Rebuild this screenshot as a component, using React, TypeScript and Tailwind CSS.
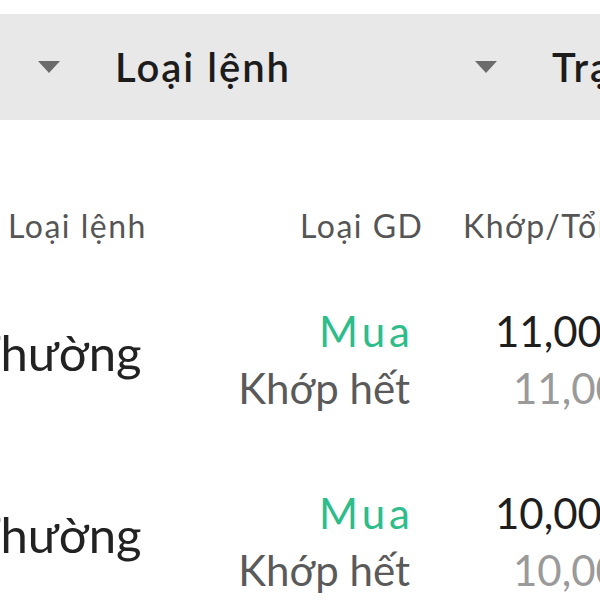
import React from "react";

function Caret() {
  return (
    <svg width="22" height="12" viewBox="0 0 22 12">
      <path d="M0 0 L22 0 L11 12 Z" fill="#6b6b6b" />
    </svg>
  );
}

const rows = [
  { kind: "Thường", side: "Mua", status: "Khớp hết", qty: "11,000", filled: "11,000" },
  { kind: "Thường", side: "Mua", status: "Khớp hết", qty: "10,000", filled: "10,000" },
];

export default function App() {
  return (
    <div
      className="w-[600px] h-[600px] overflow-hidden bg-white whitespace-nowrap"
      style={{ fontFamily: "Lato, 'Noto Sans', sans-serif" }}
    >
      <div className="h-[14px]" />

      {/* filter bar */}
      <div className="h-[106px] bg-[#e8e8e8] flex items-center">
        <div className="w-[115px] shrink-0 pl-[38px] flex items-center">
          <Caret />
        </div>
        <div className="w-[360px] shrink-0 text-[40px] tracking-[2px] font-semibold text-[#1c1c1c] leading-none">
          Loại lệnh
        </div>
        <div className="w-[77px] shrink-0 flex items-center">
          <Caret />
        </div>
        <div className="shrink-0 text-[40px] tracking-[2px] font-semibold text-[#1c1c1c] leading-none">
          Trạng thái
        </div>
      </div>

      {/* table header */}
      <div className="mt-[90px] flex items-center text-[32px] tracking-[1.5px] text-[#555555] leading-none">
        <div className="w-[300px] shrink-0 pl-[8px]">Loại lệnh</div>
        <div className="w-[115px] shrink-0 text-right">Loại GD</div>
        <div className="shrink-0 pl-[48px]">Khớp/Tổng</div>
      </div>

      {/* rows */}
      <div className="mt-[26px]">
        {rows.map((r, i) => (
          <div key={i} className="h-[182px] flex items-center">
            <div className="w-[276px] shrink-0 ml-[-28px] mb-[14px] text-[49px] text-[#222222] leading-none">
              {r.kind}
            </div>
            <div className="w-[162px] shrink-0 flex flex-col items-end gap-[15px] text-[42px] leading-none">
              <span className="text-[#2ebd8a] tracking-[4px] mr-[-4px]">{r.side}</span>
              <span className="text-[#5a5a5a]">{r.status}</span>
            </div>
            <div className="shrink-0 flex flex-col gap-[15px] text-[42px] leading-none pl-[85px]">
              <span className="text-[#1e1e1e]">{r.qty}</span>
              <span className="text-[#9a9a9a] pl-[18px]">{r.filled}</span>
            </div>
          </div>
        ))}
      </div>
    </div>
  );
}
